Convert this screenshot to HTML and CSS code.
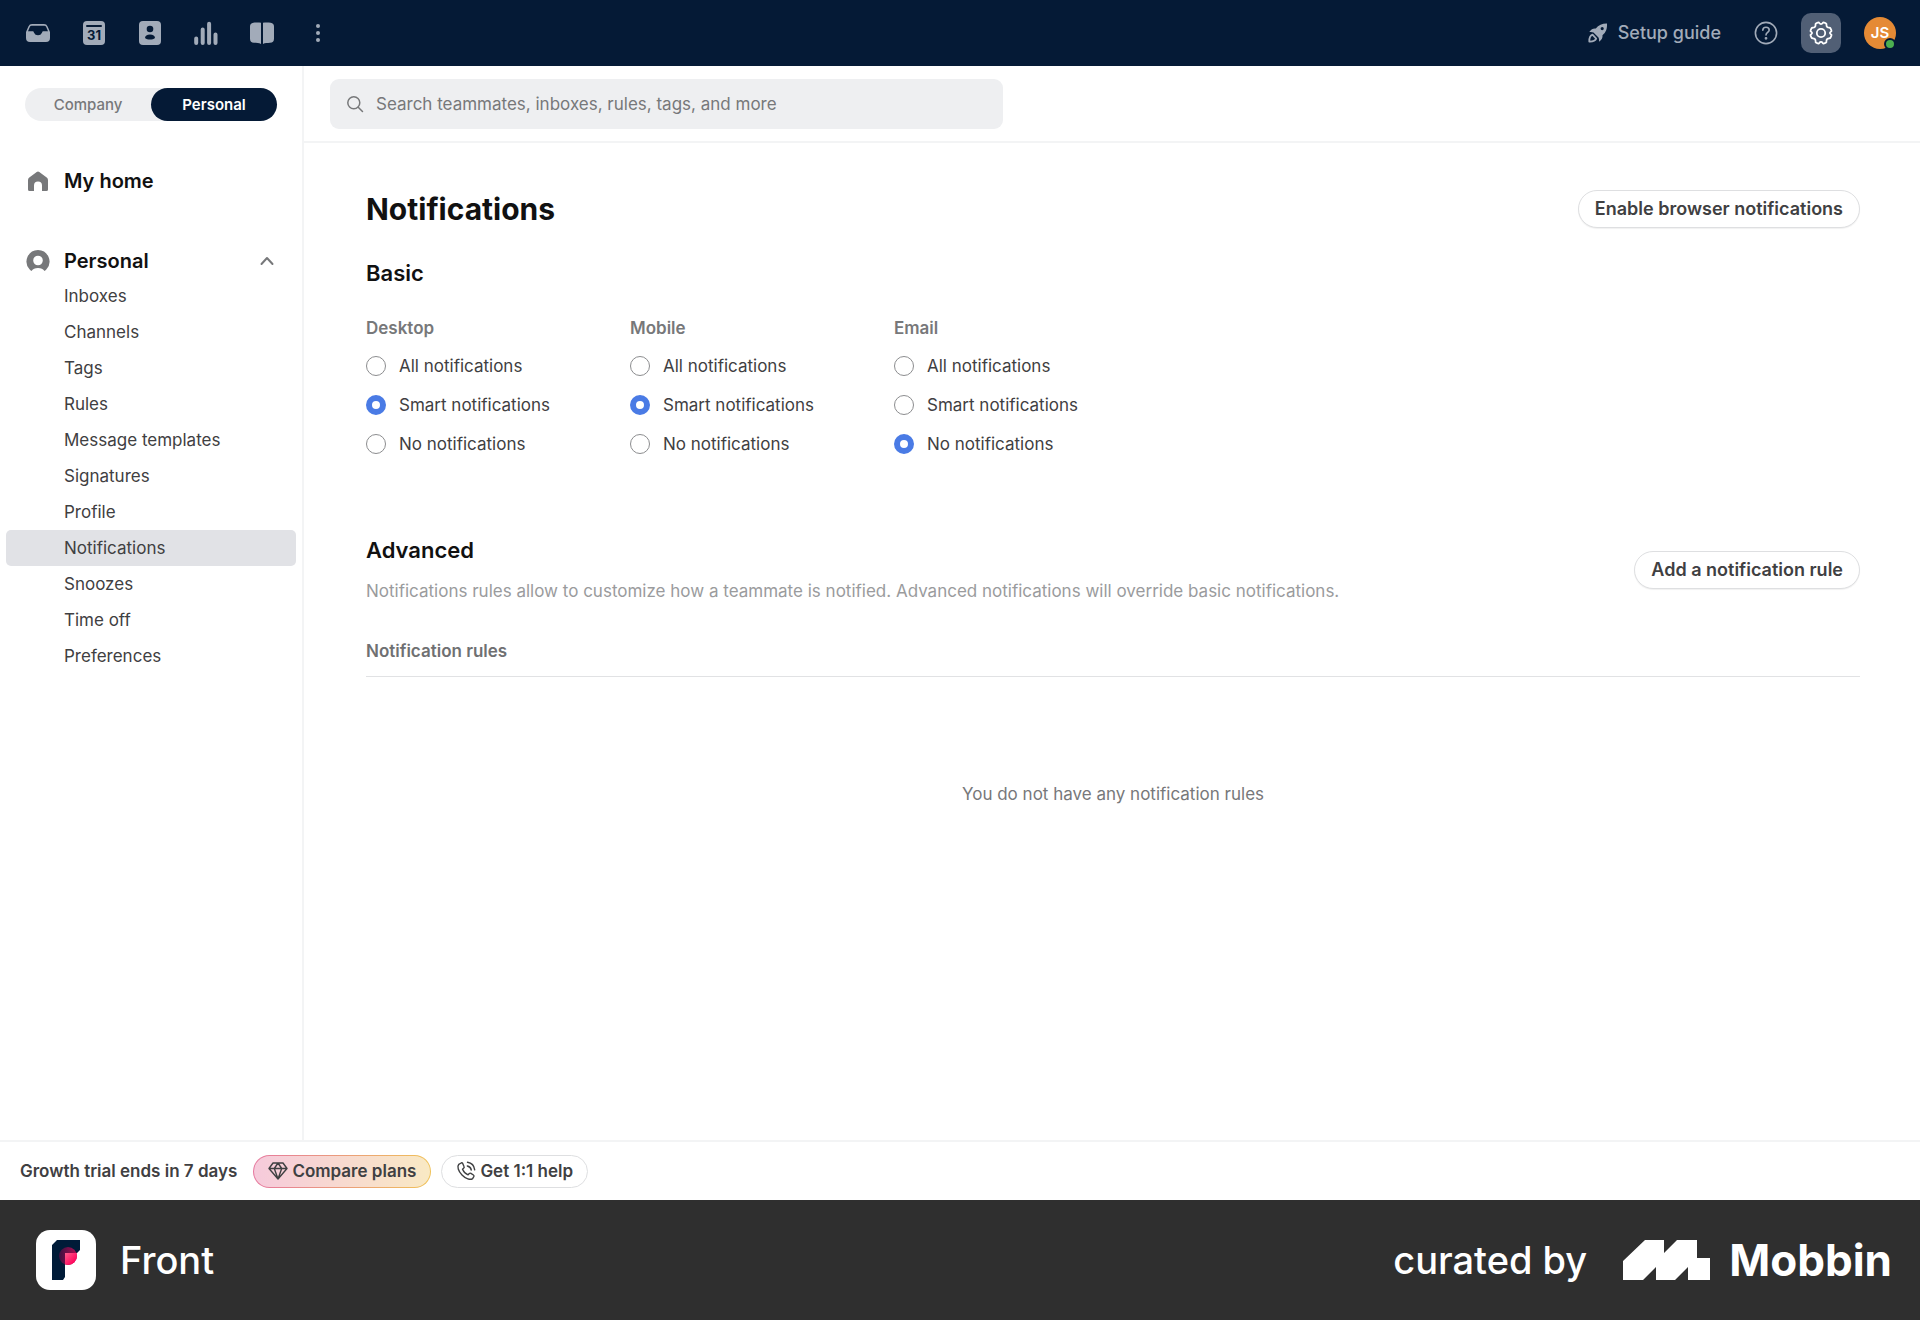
FILE: index.html
```
<!DOCTYPE html>
<html lang="en">
<head>
  <meta charset="UTF-8">
  <meta name="viewport" content="width=device-width, initial-scale=1">
  <title>Notifications</title>
  <link rel="stylesheet" href="styles.css">
</head>
<body>

  <header class="topbar">
    <nav class="apps">
      <button class="app" aria-label="Inbox">
        <svg width="24" height="24" viewBox="0 0 24 24"><path fill="currentColor" fill-rule="evenodd" d="M6 3h12a4 4 0 0 1 3.600 2.400L24 11v6a4 4 0 0 1-4 4H4a4 4 0 0 1-4-4v-6l2.400-5.600A4 4 0 0 1 6 3zM5.600 4.700a2 2 0 0 0-1.800 1.200L2 10.300h4.300c1.200 0 1.300.5 1.700 1.400a4.400 4.400 0 0 0 8 0c.4-.9.500-1.400 1.700-1.400H22l-1.800-4.400a2 2 0 0 0-1.800-1.200z"/></svg>
      </button>
      <button class="app" aria-label="Calendar">
        <svg width="24" height="24" viewBox="0 0 24 24"><rect x="1" y="0" width="22" height="24" rx="4" fill="currentColor"/><path d="M5 5h14" stroke="#051a36" stroke-width="2" stroke-linecap="round"/><text class="cal-day" x="12" y="19" text-anchor="middle">31</text></svg>
      </button>
      <button class="app" aria-label="Contacts">
        <svg width="24" height="24" viewBox="0 0 24 24"><rect x="1" y="0" width="22" height="24" rx="4" fill="currentColor"/><circle cx="12" cy="8" r="3.300" fill="#051a36"/><path d="M7 17c0-2.400 2-3.600 5-3.600s5 1.200 5 3.600c-1.300 1.100-3 1.500-5 1.500S8.300 18.100 7 17z" fill="#051a36"/></svg>
      </button>
      <button class="app" aria-label="Analytics">
        <svg width="24" height="24" viewBox="0 0 24 24" stroke="currentColor" stroke-width="4" stroke-linecap="round"><path d="M2.200 17.500V22M8.700 8.500V22M15.100 2.800V22M21.500 13.500V22"/></svg>
      </button>
      <button class="app" aria-label="Knowledge base">
        <svg width="24" height="24" viewBox="0 0 24 24" fill="currentColor"><path d="M11 23c-2-1-4.500-1-7-1.200a4 4 0 0 1-4-4V5.500a3.800 3.800 0 0 1 3.300-3.800c2.700-.4 5.400-.5 7.700.1zM13 23c2-1 4.500-1 7-1.200a4 4 0 0 0 4-4V5.500a3.800 3.800 0 0 0-3.300-3.800c-2.700-.4-5.400-.5-7.700.1z"/></svg>
      </button>
      <button class="app" aria-label="More">
        <svg width="24" height="24" viewBox="0 0 24 24" fill="currentColor"><circle cx="12" cy="5" r="2"/><circle cx="12" cy="12" r="2"/><circle cx="12" cy="19" r="2"/></svg>
      </button>
    </nav>

    <div class="tools">
      <button class="setup">
        <svg width="20" height="20" viewBox="0 0 20 20"><path fill="currentColor" fill-rule="evenodd" d="M19 .6C14.500.5 10.500 2 7.800 5.600c-2.600-.3-4.600.7-6.500 3.500 1.700-.2 3-.1 4.200.5l5 5c.6 1.200.7 2.500.5 4.200 2.800-1.900 3.800-3.900 3.500-6.500C18.100 9.600 19.300 5.500 19 .6zM14.200 4a1.600 1.600 0 1 1 0 3.200 1.600 1.600 0 0 1 0-3.200z"/><path fill="none" stroke="currentColor" stroke-width="1.800" stroke-linejoin="round" d="M4.500 11.700C2.200 12.500 1.200 15 1.300 18.600c3.400.1 6-.7 6.900-2.900z"/></svg>
        Setup guide
      </button>
      <button class="app" aria-label="Help">
        <svg width="24" height="24" viewBox="0 0 24 24" fill="none" stroke="currentColor" stroke-width="1.600" stroke-linecap="round"><circle cx="12" cy="12" r="10.600"/><path d="M8.800 9.300c0-1.900 1.400-3.100 3.200-3.100s3.200 1.200 3.200 2.900c0 2.300-3.200 2.400-3.200 4.900"/><circle cx="12" cy="17.300" r=".6" fill="currentColor"/></svg>
      </button>
      <button class="gear" aria-label="Settings">
        <svg width="24" height="24" viewBox="0 0 24 24" fill="none" stroke="currentColor" stroke-width="1.800" stroke-linejoin="round"><path d="M9 1.500c.7-.3 1 0 1.300.5.900 1.400 2.500 1.400 3.400 0 .3-.5.600-.8 1.300-.5l1.900.9c.7.3.7.800.6 1.400-.2 1.700.8 2.900 2.700 2.900.7 0 1.100.2 1.400.8l.8 1.900c.3.700.1 1.100-.5 1.400-1.300.8-1.300 1.600 0 2.400.6.300.8.700.5 1.400l-.8 1.900c-.3.600-.7.800-1.400.8-1.900 0-2.900 1.200-2.700 2.900.1.600.1 1.100-.6 1.400l-1.900.9c-.7.300-1 0-1.300-.5-.9-1.400-2.500-1.400-3.400 0-.3.500-.6.800-1.300.5l-1.900-.9c-.7-.3-.7-.8-.6-1.400.2-1.700-.8-2.900-2.700-2.900-.7 0-1.100-.2-1.400-.8l-.8-1.900c-.3-.7-.1-1.100.5-1.400 1.300-.8 1.300-1.600 0-2.400-.6-.3-.8-.7-.5-1.400l.8-1.900c.3-.6.700-.8 1.400-.8 1.900 0 2.900-1.200 2.700-2.900-.1-.6-.1-1.100.6-1.400z"/><circle cx="12" cy="12" r="4.200"/></svg>
      </button>
      <button class="avatar" aria-label="Account">JS<span class="status"></span></button>
    </div>
  </header>

  <div class="layout">
    <aside class="sidebar">
      <div class="switch">
        <button class="switch-item">Company</button>
        <button class="switch-item active">Personal</button>
      </div>

      <a class="side-head" href="#">
        <svg width="24" height="24" viewBox="0 0 24 24"><path fill="currentColor" d="M3.300 8.600 10.700 3a2.200 2.200 0 0 1 2.600 0l7.400 5.600A3.200 3.200 0 0 1 22 11v9.500a1.500 1.500 0 0 1-1.500 1.500H16v-5.500a4 4 0 0 0-8 0V22H3.500A1.500 1.500 0 0 1 2 20.500V11a3.200 3.200 0 0 1 1.300-2.400z"/></svg>
        My home
      </a>

      <button class="side-head">
        <svg width="24" height="24" viewBox="0 0 24 24"><path fill="currentColor" fill-rule="evenodd" d="M12 1a11.500 11.500 0 0 1 8.500 19.200c-.6.700-1.200 1.300-2 1.800-1.200-2-3.500-3-6.500-3s-5.300 1-6.500 3c-.8-.5-1.400-1.100-2-1.800A11.500 11.500 0 0 1 12 1zm0 5.700a4.800 4.800 0 1 0 0 9.600 4.800 4.800 0 0 0 0-9.600z"/></svg>
        Personal
        <svg class="chevron" width="14" height="10" viewBox="0 0 14 10"><path d="m1.500 8 5.500-6 5.500 6" fill="none" stroke="currentColor" stroke-width="2" stroke-linecap="round" stroke-linejoin="round"/></svg>
      </button>

      <nav class="side-list">
        <a href="#">Inboxes</a>
        <a href="#">Channels</a>
        <a href="#">Tags</a>
        <a href="#">Rules</a>
        <a href="#">Message templates</a>
        <a href="#">Signatures</a>
        <a href="#">Profile</a>
        <a href="#" class="current">Notifications</a>
        <a href="#">Snoozes</a>
        <a href="#">Time off</a>
        <a href="#">Preferences</a>
      </nav>
    </aside>

    <main class="main">
      <div class="search-row">
        <label class="search">
          <svg width="18" height="18" viewBox="0 0 18 18" fill="none" stroke="currentColor" stroke-width="1.500" stroke-linecap="round"><circle cx="7.800" cy="7.800" r="6"/><path d="m12.200 12.200 4.300 4.300"/></svg>
          <input type="text" aria-label="Search" placeholder="Search teammates, inboxes, rules, tags, and more">
        </label>
      </div>

      <div class="content">
        <div class="title-row">
          <h1>Notifications</h1>
          <button class="pill">Enable browser notifications</button>
        </div>

        <h2>Basic</h2>
        <div class="groups">
          <fieldset>
            <legend>Desktop</legend>
            <label><input type="radio" name="desktop">All notifications</label>
            <label><input type="radio" name="desktop" checked>Smart notifications</label>
            <label><input type="radio" name="desktop">No notifications</label>
          </fieldset>
          <fieldset>
            <legend>Mobile</legend>
            <label><input type="radio" name="mobile">All notifications</label>
            <label><input type="radio" name="mobile" checked>Smart notifications</label>
            <label><input type="radio" name="mobile">No notifications</label>
          </fieldset>
          <fieldset>
            <legend>Email</legend>
            <label><input type="radio" name="email">All notifications</label>
            <label><input type="radio" name="email">Smart notifications</label>
            <label><input type="radio" name="email" checked>No notifications</label>
          </fieldset>
        </div>

        <div class="advanced">
          <div>
            <h2>Advanced</h2>
            <p>Notifications rules allow to customize how a teammate is notified. Advanced notifications will override basic notifications.</p>
          </div>
          <button class="pill">Add a notification rule</button>
        </div>

        <h3>Notification rules</h3>
        <p class="empty">You do not have any notification rules</p>
      </div>
    </main>
  </div>

  <div class="trial">
    <span>Growth trial ends in 7 days</span>
    <button class="small-pill plans">
      <svg width="20" height="20" viewBox="0 0 20 20" fill="none" stroke="currentColor" stroke-width="1.400" stroke-linejoin="round"><path d="M5 2h10l4 5.500L10 18 1 7.500zM1 7.500h18M10 2 6.300 7.500 10 18l3.700-10.500z"/></svg>
      Compare plans
    </button>
    <button class="small-pill">
      <svg width="20" height="20" viewBox="0 0 20 20" fill="none" stroke="currentColor" stroke-width="1.400" stroke-linecap="round" stroke-linejoin="round"><path d="M5.200 2 2.800 3.300C.9 5.500 2.200 10 6 13.900s8.300 5.400 10.600 3.700l1.200-1.900c.4-.7.200-1.300-.4-1.700l-2.500-1.600c-.6-.4-1.200-.3-1.600.1l-1.200 1.300c-2.600-1-4.500-3.100-5.600-5.600l1.300-1.200c.5-.4.500-1 .2-1.500L6.700 2.400c-.4-.6-.9-.7-1.500-.4zM11.500 1.300a8.700 8.700 0 0 1 7.200 7.500M11.300 5a5 5 0 0 1 4 4"/></svg>
      Get 1:1 help
    </button>
  </div>

  <footer class="credit">
    <div class="brand">
      <span class="brand-icon">
        <svg width="60" height="60" viewBox="0 0 60 60">
          <defs>
            <linearGradient id="pink" x1="0" y1="0" x2="1" y2="1"><stop offset="0" stop-color="#ff5c8c"/><stop offset=".7" stop-color="#ff0059"/></linearGradient>
            <linearGradient id="shade" x1="0" y1="0" x2="1" y2="0"><stop offset="0" stop-color="#3d1040"/><stop offset="1" stop-color="#b00d52"/></linearGradient>
            <clipPath id="dot"><circle cx="32" cy="26" r="9"/></clipPath>
          </defs>
          <path fill="#001b38" d="M21 10h23v10l-3 3H29v24l-2 3H16V15z"/>
          <circle cx="32" cy="26" r="9" fill="url(#shade)"/>
          <rect x="29" y="23" width="14" height="14" fill="url(#pink)" clip-path="url(#dot)"/>
        </svg>
      </span>
      Front
    </div>
    <div class="curated">
      <span>curated by</span>
      <svg width="88" height="40" viewBox="0 0 88 40" fill="#fff"><path d="M0 21 22 0h19v13L54 0h20v18h13v22H65V27L52 40H33V27L20 40H0z"/></svg>
      <strong>Mobbin</strong>
    </div>
  </footer>

</body>
</html>
```
FILE: styles.css
```
* {
  box-sizing: border-box;
}

body {
  margin: 0;
  min-height: 100vh;
  display: flex;
  flex-direction: column;
  font-family: Inter, "Liberation Sans", sans-serif;
  font-size: 17px;
  line-height: 24px;
  color: #3f4042;
  background: #fff;
}

h1, h2, h3, p {
  margin: 0;
}

button {
  border: 0;
  padding: 0;
  background: none;
  font: inherit;
  color: inherit;
}

a {
  color: inherit;
  text-decoration: none;
}

svg {
  display: block;
  flex: none;
}

/* top bar */
.topbar {
  display: flex;
  justify-content: space-between;
  align-items: center;
  height: 66px;
  padding: 0 24px 0 26px;
  background: #051a36;
  color: #a2abb9;
}

.apps {
  display: flex;
  gap: 32px;
}

.cal-day {
  font-size: 13px;
  font-weight: 700;
  fill: #051a36;
}

.tools {
  display: flex;
  align-items: center;
  gap: 23px;
}

.setup {
  display: flex;
  align-items: center;
  gap: 10px;
  margin-right: 10px;
  font-size: 18px;
  font-weight: 500;
}

.gear {
  display: grid;
  place-items: center;
  width: 40px;
  height: 40px;
  border-radius: 10px;
  background: #515f75;
  color: #fff;
}

.avatar {
  position: relative;
  width: 32px;
  height: 32px;
  border-radius: 50%;
  background: #e58a35;
  color: #fff;
  font-size: 15px;
  font-weight: 600;
}

.status {
  position: absolute;
  right: 0;
  bottom: -1px;
  width: 12px;
  height: 12px;
  border: 2px solid #051a36;
  border-radius: 50%;
  background: #4caf50;
}

/* side bar */
.layout {
  flex: 1;
  display: flex;
}

.sidebar {
  width: 304px;
  padding: 22px 6px;
  border-right: 2px solid #f3f4f5;
}

.switch {
  display: flex;
  margin: 0 19px 40px;
  border-radius: 17px;
  background: #eeeff1;
}

.switch-item {
  flex: 1;
  height: 33px;
  border-radius: 17px;
  font-size: 15px;
  font-weight: 500;
  color: #77787a;
}

.switch-item.active {
  background: #051a36;
  color: #fff;
  font-weight: 600;
}

.side-head {
  display: flex;
  align-items: center;
  gap: 14px;
  width: 100%;
  height: 40px;
  margin-bottom: 40px;
  padding: 0 22px 0 20px;
  font-size: 20px;
  font-weight: 600;
  color: #111;
}

.side-head svg {
  color: #77787a;
}

.side-head + .side-list {
  margin-top: -43px;
}

.chevron {
  margin-left: auto;
}

.side-list a {
  display: block;
  padding-left: 58px;
  border-radius: 5px;
  line-height: 36px;
}

.side-list .current {
  background: #e1e2e6;
}

/* main area */
.main {
  flex: 1;
}

.search-row {
  padding: 13px 26px 12px;
  border-bottom: 2px solid #f3f4f5;
}

.search {
  display: flex;
  align-items: center;
  gap: 12px;
  width: 43%;
  height: 50px;
  padding: 0 16px;
  border-radius: 9px;
  background: #eeeff1;
  color: #77787a;
}

.search input {
  flex: 1;
  border: 0;
  padding: 0;
  background: none;
  font: inherit;
}

.search input::placeholder {
  color: #77787a;
  opacity: 1;
}

.content {
  padding: 46px 60px 40px 62px;
}

.title-row {
  display: flex;
  justify-content: space-between;
  align-items: center;
  margin-bottom: 28px;
}

h1 {
  font-size: 30px;
  line-height: 40px;
  font-weight: 700;
  color: #111;
}

h2 {
  font-size: 22px;
  line-height: 32px;
  font-weight: 600;
  color: #111;
}

.pill {
  height: 38px;
  padding: 0 16px;
  border: 1px solid #dedfe1;
  border-radius: 19px;
  background: #fff;
  box-shadow: 0 1px 1px rgba(0, 0, 0, 0.06);
  font-size: 18px;
  font-weight: 600;
}

.groups {
  display: flex;
  gap: 24px;
  margin: 27px 0 71px;
}

fieldset {
  width: 240px;
  margin: 0;
  padding: 0;
  border: 0;
}

legend {
  padding: 0;
  margin-bottom: 6px;
  font-weight: 600;
  color: #77787a;
}

fieldset label {
  display: flex;
  align-items: center;
  gap: 13px;
  height: 39px;
}

fieldset input {
  appearance: none;
  width: 20px;
  height: 20px;
  margin: 0;
  border: 1px solid #8c8d8f;
  border-radius: 50%;
}

fieldset input:checked {
  border: 6px solid #4a7be5;
}

.advanced {
  display: flex;
  justify-content: space-between;
  align-items: center;
  margin-bottom: 34px;
}

.advanced p {
  margin-top: 11px;
  line-height: 28px;
  color: #9a9b9d;
}

h3 {
  padding-bottom: 13px;
  border-bottom: 1px solid #e1e2e4;
  font-size: 17px;
  line-height: 24px;
  font-weight: 600;
  color: #6f7072;
}

.empty {
  margin-top: 105px;
  text-align: center;
  color: #77787a;
}

/* trial bar */
.trial {
  display: flex;
  align-items: center;
  gap: 10px;
  height: 60px;
  padding: 0 20px;
  border-top: 2px solid #f3f4f5;
  font-weight: 600;
}

.trial span {
  margin-right: 6px;
}

.small-pill {
  display: flex;
  align-items: center;
  gap: 4px;
  height: 33px;
  padding: 0 14px;
  border: 1px solid #dedfe1;
  border-radius: 17px;
}

.plans {
  border-color: transparent;
  background: linear-gradient(90deg, #f6cadb, #f9e9c4) padding-box, linear-gradient(90deg, #e6789f, #f0c258) border-box;
}

/* credit footer */
.credit {
  display: flex;
  justify-content: space-between;
  align-items: center;
  height: 120px;
  padding: 0 28px 0 36px;
  background: #2f2f2f;
  color: #fff;
  font-size: 38px;
  line-height: 48px;
  font-weight: 500;
}

.brand,
.curated {
  display: flex;
  align-items: center;
  gap: 24px;
}

.brand-icon {
  border-radius: 14px;
  background: #fff;
}

.curated svg {
  margin-left: 12px;
}

.curated strong {
  margin-left: -6px;
  font-size: 44px;
  font-weight: 700;
}
```
